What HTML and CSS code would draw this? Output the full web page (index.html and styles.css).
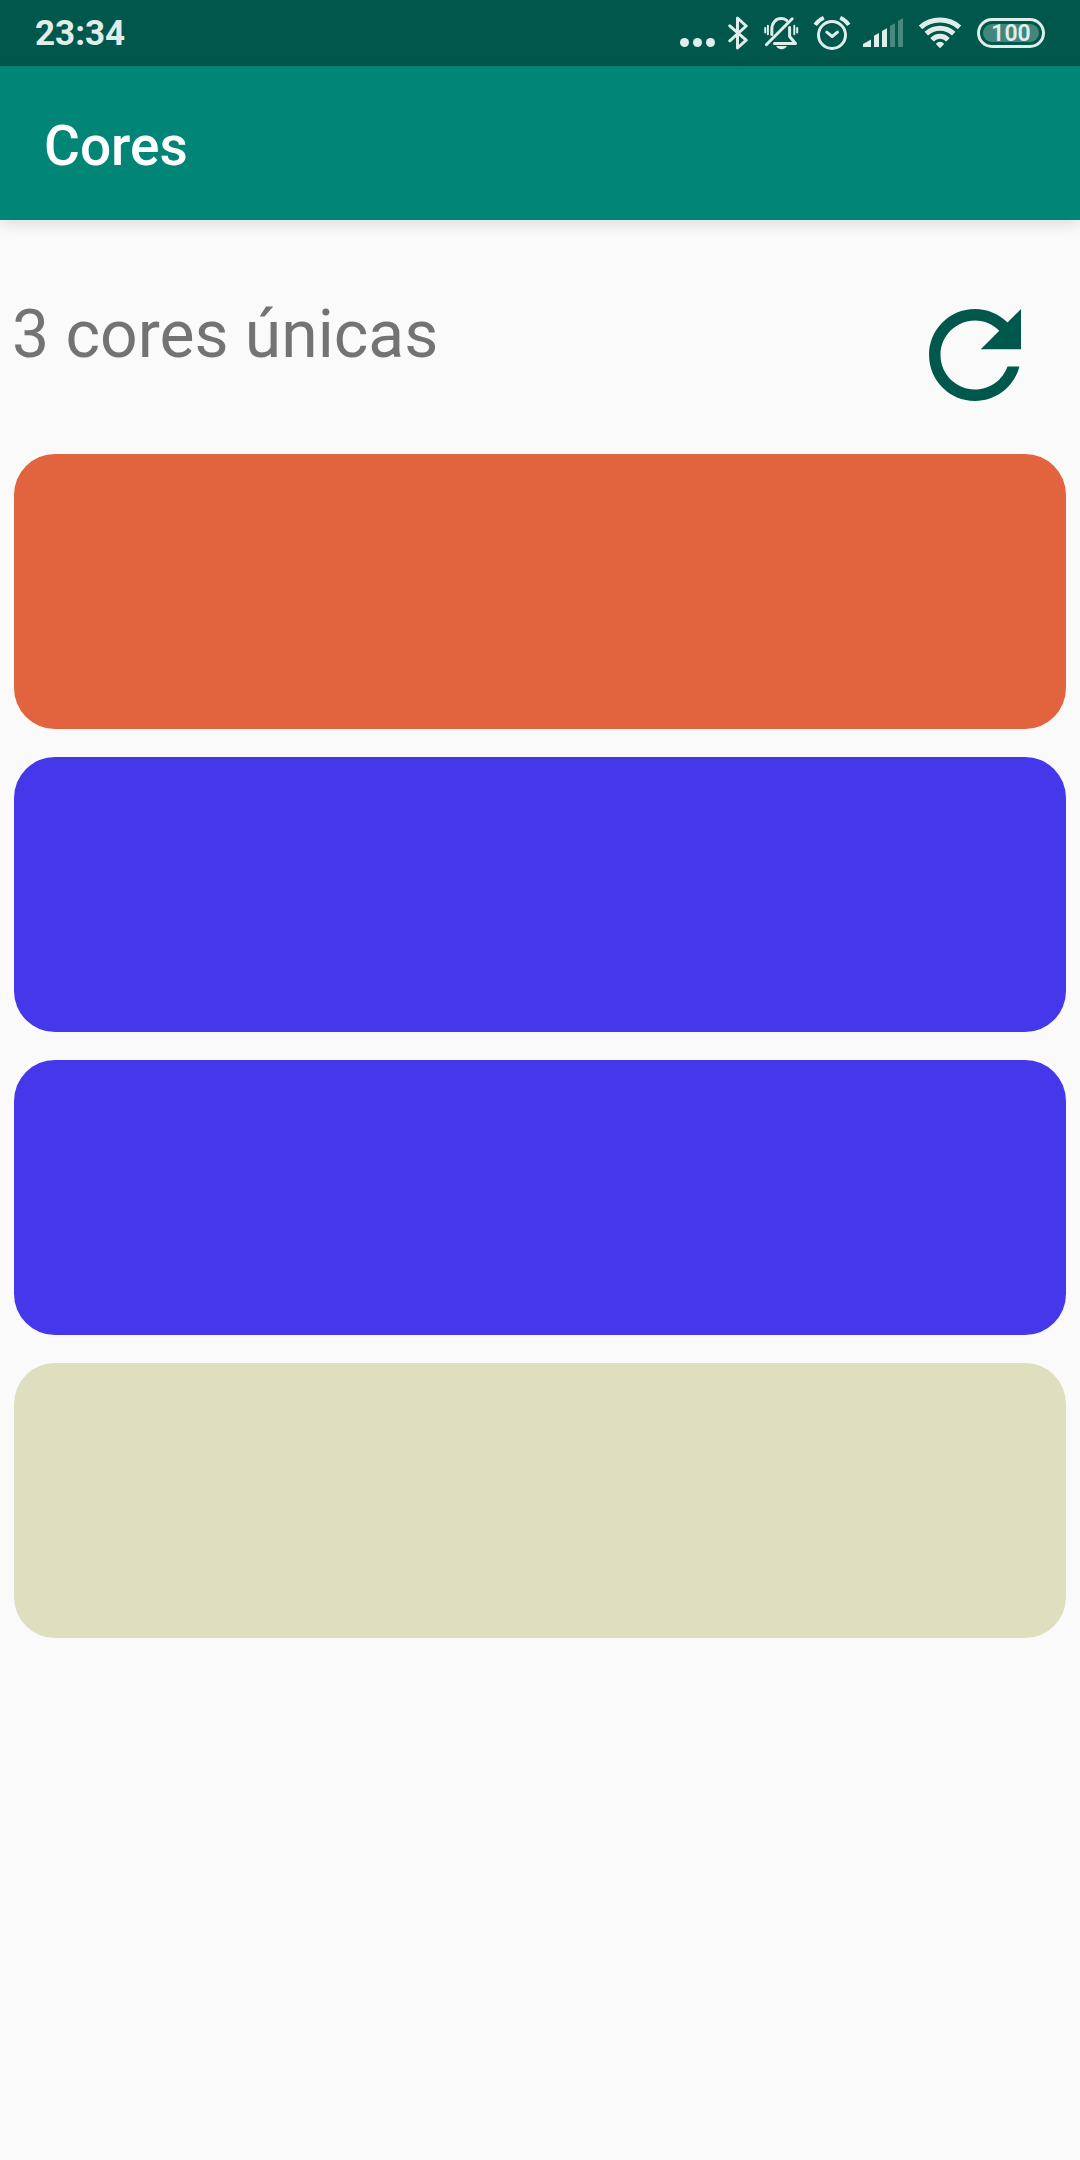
FILE: index.html
```html
<!DOCTYPE html>
<html lang="pt-BR">
<head>
<meta charset="utf-8">
<meta name="viewport" content="width=device-width, initial-scale=1">
<title>Cores</title>
<link rel="stylesheet" href="styles.css">
</head>
<body>
<div class="status-bar">
  <time class="clock">23:34</time>
  <div class="status-icons">
    <svg class="icon" width="36" height="34" viewBox="0 0 36 34" aria-hidden="true">
      <circle cx="4.5" cy="26.5" r="4.5"/><circle cx="17.5" cy="26.5" r="4.5"/><circle cx="30.5" cy="26.5" r="4.5"/>
    </svg>
    <svg class="icon line" width="24" height="34" viewBox="0 0 24 34" aria-hidden="true">
      <path d="M1.8 9.8 18.2 24.2 9.5 32V2L18.2 10 1.8 24.8"/>
    </svg>
    <svg class="icon line" width="36" height="34" viewBox="0 0 36 34" aria-hidden="true">
      <path d="M2.3 28.7 28.2 2.8"/>
      <path d="M7.8 18.5V13.5C7.8 6.5 12 2.6 17.2 2.6c2.2 0 4 .6 5.4 1.8"/>
      <path d="M25.6 11.5V20.5L31.5 27.5H10.5"/>
      <path stroke="none" fill="currentColor" d="M12 30h11c-1 2-3 3.2-5.5 3.2S13 32 12 30z"/>
      <path stroke-width="2" d="M1.2 12v4.5M3.9 9.8v8.5M30.3 9.8v8.500M33.200 12v4.500"/>
    </svg>
    <svg class="icon line" width="39" height="34" viewBox="0 0 39 34" aria-hidden="true">
      <circle cx="20" cy="19" r="13.5"/>
      <path d="M14.8 16.2 20.2 20.5 25.5 16.2"/>
      <path stroke-width="4" stroke-linecap="butt" d="M3.2 8.8Q6 4.5 11.8 1.8M28.2 1.8Q34 4.5 36.8 8.8"/>
    </svg>
    <svg class="icon" width="40" height="34" viewBox="0 0 40 34" aria-hidden="true">
      <path d="M0 31v-3l8-4.5V31zM11 31V19.800l5-2.800v14zM19 31V15l5-2.800V31z"/>
      <path opacity=".32" d="M27 31V10l5-2.800V31zM35 31V5l5-3v29z"/>
    </svg>
    <svg class="icon line wifi" width="50" height="34" viewBox="0 0 50 34" aria-hidden="true">
      <path d="M5.5 11.300Q13.500 4 25 4t19.500 7.300M11.300 17.600Q17 12.200 25 12.200t13.700 5.400M17 23.800q3.500-3.600 8-3.600t8 3.600"/>
      <path stroke="none" fill="currentColor" d="M20.800 28q1.500-2.300 4.200-2.300t4.200 2.300L25 32.300z"/>
    </svg>
    <span class="battery"><span class="battery-level">100</span></span>
  </div>
</div>
<header class="app-bar">
  <h1 class="app-title">Cores</h1>
</header>
<main class="content">
  <div class="summary">
    <p class="count">3 cores únicas</p>
    <button class="refresh" type="button" aria-label="Atualizar">
      <svg class="refresh-icon" viewBox="0 0 24 24" aria-hidden="true">
        <path d="M17.65 6.35C16.2 4.9 14.21 4 12 4c-4.42 0-7.99 3.58-7.99 8s3.57 8 7.99 8c3.73 0 6.84-2.55 7.73-6h-2.08c-.82 2.33-3.04 4-5.65 4-3.31 0-6-2.69-6-6s2.69-6 6-6c1.66 0 3.14.69 4.22 1.78L13 11h7V4l-2.35 2.35z"/>
      </svg>
    </button>
  </div>
  <ul class="color-list">
    <li class="color orange"></li>
    <li class="color blue"></li>
    <li class="color blue"></li>
    <li class="color beige"></li>
  </ul>
</main>
</body>
</html>
```

FILE: styles.css
```css
* {
  box-sizing: border-box;
}

body {
  margin: 0;
  min-height: 100vh;
  background: #fafafa;
  font-family: Roboto, "Noto Sans", sans-serif;
}

.status-bar {
  display: flex;
  align-items: center;
  justify-content: space-between;
  height: 66px;
  padding: 0 35px;
  background: #00574b;
  color: #e0eeeb;
}

.clock {
  padding-top: 2px;
  font-size: 35px;
  font-weight: 700;
  line-height: 40px;
}

.status-icons {
  display: flex;
  align-items: center;
  gap: 12px;
}

.icon {
  display: block;
  fill: currentColor;
}

.line {
  fill: none;
  stroke: currentColor;
  stroke-width: 3;
  stroke-linecap: round;
  stroke-linejoin: round;
}

.wifi {
  stroke-width: 5;
  stroke-linecap: butt;
}

.battery {
  width: 68px;
  height: 30px;
  padding: 3px;
  border: 3px solid currentColor;
  border-radius: 15px;
}

.battery-level {
  display: block;
  height: 18px;
  border-radius: 9px;
  background: #43867c;
  font-size: 23px;
  font-weight: 600;
  line-height: 20px;
  text-align: center;
}

.app-bar {
  display: flex;
  align-items: center;
  height: 154px;
  padding: 6px 44px 0;
  background: #008577;
  box-shadow: 0 4px 14px rgba(0, 0, 0, 0.12);
}

.app-title {
  margin: 0;
  color: #fff;
  font-size: 55px;
  font-weight: 500;
  line-height: 64px;
}

.content {
  padding: 66px 0 28px;
}

.summary {
  display: flex;
  justify-content: space-between;
  padding: 0 36px 0 12px;
  margin-bottom: 30px;
}

.count {
  margin: 10px 0 0;
  color: #737373;
  font-size: 66px;
  line-height: 78px;
}

.refresh {
  width: 138px;
  height: 138px;
  padding: 0;
  border: 0;
  background: none;
  cursor: pointer;
}

.refresh-icon {
  display: block;
  width: 100%;
  fill: #00574b;
}

.color-list {
  display: grid;
  gap: 28px;
  margin: 0;
  padding: 0 14px;
  list-style: none;
}

.color {
  height: 275px;
  border-radius: 41px;
}

.orange {
  background: #e2643e;
}

.blue {
  background: #4538eb;
}

.beige {
  background: #dedfbf;
}
```
